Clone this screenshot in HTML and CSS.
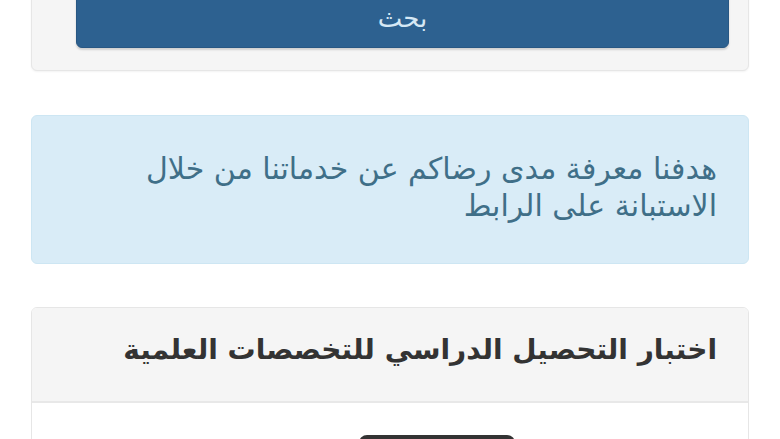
FILE: index.html
```html
<!DOCTYPE html>
<html lang="ar" dir="rtl">
<head>
<meta charset="utf-8">
<link rel="stylesheet" href="styles.css">
</head>
<body>
<div class="page">
  <div class="card search-card">
    <button class="btn-search">بحث</button>
  </div>
  <div class="alert">هدفنا معرفة مدى رضاكم عن خدماتنا من خلال الاستبانة على الرابط</div>
  <div class="card panel">
    <div class="panel-head">اختبار التحصيل الدراسي للتخصصات العلمية</div>
    <div class="panel-body">
      <button class="btn-dark">&nbsp;</button>
    </div>
  </div>
</div>
</body>
</html>
```
FILE: styles.css
```css
html, body {
  margin: 0;
  padding: 0;
  background: #ffffff;
  overflow: hidden;
  height: 439px;
}
body {
  font-family: "DejaVu Sans", sans-serif;
}
.page {
  padding: 0 31px;
  display: flex;
  flex-direction: column;
}
.card {
  border: 1px solid #e6e6e6;
  border-radius: 6px;
  box-sizing: border-box;
}
.search-card {
  margin-top: -40px;
  background: #f5f5f5;
  padding: 20px 19px 22px 44px;
  box-shadow: 0 1px 2px rgba(0,0,0,0.05);
}
.btn-search {
  display: block;
  width: 100%;
  height: 67px;
  padding-top: 8px;
  background: #2d6190;
  border: 1px solid #285783;
  border-radius: 6px;
  color: #d6e8f5;
  font-family: "DejaVu Sans", sans-serif;
  font-size: 26px;
  box-shadow: 0 2px 2px rgba(0,0,0,0.15);
}
.alert {
  margin-top: 44px;
  height: 149px;
  box-sizing: border-box;
  background: #d9ecf7;
  border: 1px solid #cde6f3;
  border-radius: 6px;
  color: #3f6f88;
  font-size: 30px;
  line-height: 37px;
  padding: 34px 31px 0 60px;
  text-align: right;
}
.panel {
  margin-top: 43px;
  background: #fff;
  overflow: hidden;
  height: 140px;
}
.panel-head {
  background: #f5f5f5;
  border-bottom: 2px solid #e8e8e8;
  height: 95px;
  box-sizing: border-box;
  padding: 25px 31px 0;
  font-size: 28px;
  font-weight: bold;
  color: #333;
  text-align: right;
}
.panel-body {
  display: flex;
  justify-content: center;
  padding-top: 32px;
}
.btn-dark {
  width: 156px;
  height: 40px;
  margin-left: 94px;
  background: #333;
  border: none;
  border-radius: 8px;
}
```
